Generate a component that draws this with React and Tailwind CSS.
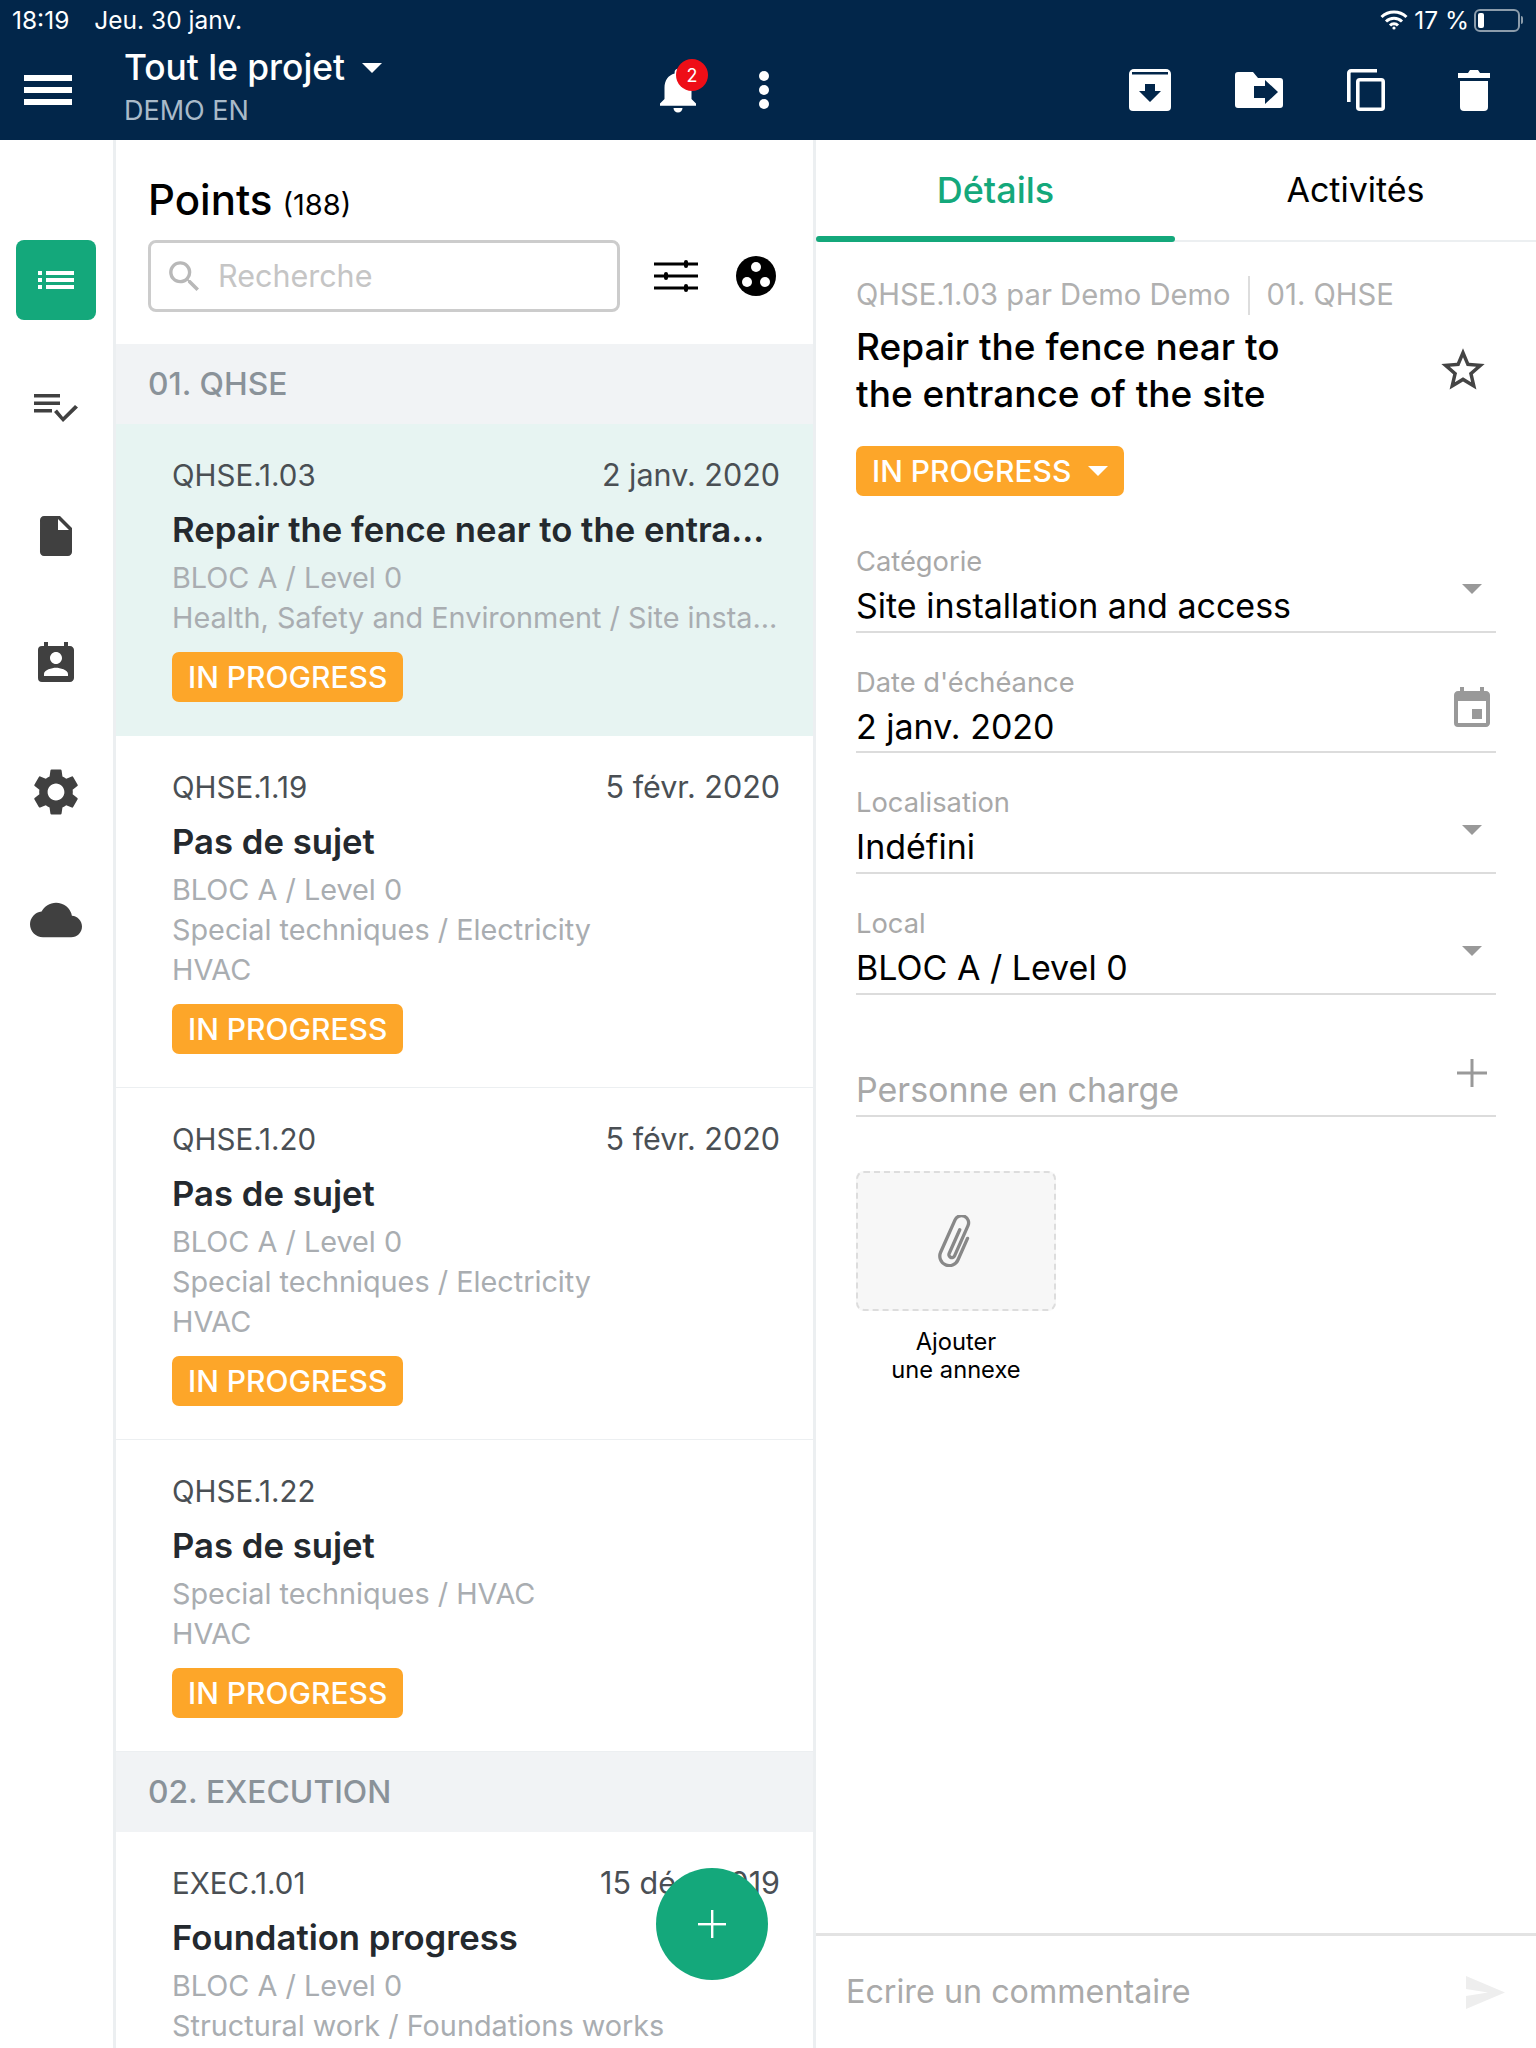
import React from "react";
import {
  MdInsertDriveFile,
  MdPermContactCalendar,
  MdSettings,
  MdCloud,
  MdNotifications,
  MdSearch,
  MdStarBorder,
  MdEvent,
} from "react-icons/md";

const Tri = ({ className }) => (
  <svg viewBox="0 0 20 10" className={className}>
    <polygon points="0,0 20,0 10,10" fill="currentColor" />
  </svg>
);

const ArchiveIcon = () => (
  <svg viewBox="0 0 42 42" className="w-[42px] h-[42px]">
    <path d="M5 0h32a5 5 0 0 1 5 5v33a4 4 0 0 1-4 4H4a4 4 0 0 1-4-4V5a5 5 0 0 1 5-5z" fill="#fff" />
    <rect x="3" y="3" width="36" height="2.5" fill="#02264a" />
    <polygon points="16,15 26,15 26,22 32,22 21,33 10,22 16,22" fill="#02264a" />
  </svg>
);

const FolderIcon = () => (
  <svg viewBox="0 0 48 36" className="w-[48px] h-[36px]">
    <path d="M3 0h15l5 6h22a3 3 0 0 1 3 3v24a3 3 0 0 1-3 3H3a3 3 0 0 1-3-3V3a3 3 0 0 1 3-3z" fill="#fff" />
    <polygon points="19,14 30,14 30,8 43,20 30,32 30,26 19,26" fill="#02264a" />
  </svg>
);

const CopyIcon = () => (
  <svg viewBox="0 0 38 42" className="w-[38px] h-[42px]" fill="none" stroke="#fff" strokeWidth="3.6">
    <path d="M30 1.8H4A2.2 2.2 0 0 0 1.8 4v29" />
    <rect x="10.8" y="10.8" width="25.4" height="29.4" rx="2" />
  </svg>
);

const TrashIcon = () => (
  <svg viewBox="0 0 32 42" className="w-[32px] h-[42px]">
    <path d="M0 4h10l2-3h8l2 3h10v5H0z" fill="#fff" />
    <path d="M2 12h28v26a4 4 0 0 1-4 4H6a4 4 0 0 1-4-4z" fill="#fff" />
  </svg>
);

const Wifi = () => (
  <svg viewBox="0 0 28 20" className="w-[28px] h-[20px]" fill="none" stroke="#fff" strokeWidth="3">
    <path d="M1.5 7a18 18 0 0 1 25 0" />
    <path d="M6 11.5a11.5 11.5 0 0 1 16 0" />
    <path d="M10 15.5a5.5 5.5 0 0 1 8 0" />
    <circle cx="14" cy="18" r="1.6" fill="#fff" stroke="none" />
  </svg>
);

const Battery = () => (
  <div className="flex items-center">
    <div className="w-[46px] h-[23px] rounded-[6px] border-2 border-[#8c9cab] p-[2px]">
      <div className="w-[6px] h-full bg-white rounded-[2px]" />
    </div>
    <div className="w-[2px] h-[8px] bg-[#8c9cab] ml-[1px] rounded-r-sm" />
  </div>
);

const ListIcon = () => (
  <svg viewBox="0 0 36 20" className="w-[36px] h-[20px]" fill="#fff">
    <rect x="0" y="1" width="4" height="4" />
    <rect x="0" y="8" width="4" height="4" />
    <rect x="0" y="15" width="4" height="4" />
    <rect x="8" y="1" width="28" height="4" />
    <rect x="8" y="8" width="28" height="4" />
    <rect x="8" y="15" width="28" height="4" />
  </svg>
);

const CheckListIcon = () => (
  <svg viewBox="0 0 44 28" className="w-[44px] h-[28px]" fill="#404040">
    <rect x="0" y="0" width="26" height="3.5" />
    <rect x="0" y="7.5" width="26" height="3.5" />
    <rect x="0" y="15" width="18" height="3.5" />
    <polygon points="20,18 23,15.5 29,23 41,11 44,13.5 29,28" />
  </svg>
);

const FilterIcon = () => (
  <svg viewBox="0 0 44 32" className="w-[44px] h-[32px]" fill="#000">
    <rect x="0" y="2.5" width="44" height="3" />
    <rect x="0" y="14.5" width="44" height="3" />
    <rect x="0" y="26.5" width="44" height="3" />
    <rect x="30" y="0" width="4" height="8" rx="2" />
    <rect x="10" y="12" width="4" height="8" rx="2" />
    <rect x="30" y="24" width="4" height="8" rx="2" />
  </svg>
);

const GroupIcon = () => (
  <svg viewBox="0 0 40 40" className="w-[40px] h-[40px]">
    <circle cx="20" cy="20" r="20" fill="#000" />
    <circle cx="20" cy="11" r="5" fill="#fff" />
    <circle cx="11" cy="26" r="5" fill="#fff" />
    <circle cx="29" cy="26" r="5" fill="#fff" />
  </svg>
);

const Clip = () => (
  <svg viewBox="-16.5 -22 33 44" className="w-[40px] h-[52px]" fill="none" stroke="#888" strokeWidth="2.8" strokeLinecap="round">
    <g transform="rotate(24)">
      <path d="M8-6V14a8 8 0 0 1-16 0V-16a6 6 0 0 1 12 0V12a2.5 2.5 0 0 1-5 0V-10" />
    </g>
  </svg>
);

const Badge = ({ children, className = "" }) => (
  <div className={"inline-flex items-center h-[50px] rounded-[7px] bg-[#fda629] text-white text-[30px] font-medium px-[16px] " + className}>
    {children}
  </div>
);

const Row = ({ code, date, title, lines, selected }) => (
  <div className={"pt-[33px] pl-[56px] pr-[33px] " + (selected ? "pb-[34px] bg-[#e7f4f2]" : "pb-[33px] border-b border-[#eceff1] bg-white")}>
    <div className="flex justify-between items-center h-[36px] text-[#4a4f54]">
      <span className="text-[29.5px]">{code}</span>
      <span className="text-[30.5px]">{date}</span>
    </div>
    <div className="mt-[10px] h-[52px] leading-[52px] text-[34.7px] font-semibold text-[#24292e] whitespace-nowrap">{title}</div>
    <div className="mt-[3px] text-[28.8px] leading-[40px] text-[#a9adb1]">
      {lines.map((l) => (
        <div key={l} className="whitespace-nowrap">{l}</div>
      ))}
    </div>
    <div className="mt-[14px] flex">
      <Badge>IN PROGRESS</Badge>
    </div>
  </div>
);

const Section = ({ children }) => (
  <div className="h-[80px] flex items-center pl-[32px] bg-[#f1f3f5] text-[31.8px] font-medium text-[#8a9299]">{children}</div>
);

const Field = ({ label, value, icon }) => (
  <div className="relative h-[120.7px] pt-[32px] border-b-2 border-[#dcdcdc]">
    <div className="h-[36px] leading-[36px] text-[27.3px] text-[#a8a8a8]">{label}</div>
    <div className="mt-[3px] h-[46px] leading-[46px] text-[34px] text-black">{value}</div>
    <div className="absolute right-[14px] top-[52px] text-[#999]">{icon}</div>
  </div>
);

const Nav = ({ children, active }) => (
  <div className="h-[128px] flex items-start justify-center pr-[1px]">
    <div className={"w-[80px] h-[80px] rounded-[8px] flex items-center justify-center " + (active ? "bg-[#14a87b]" : "")}>{children}</div>
  </div>
);

export default function App() {
  return (
    <div className="relative w-[1536px] h-[2048px] overflow-hidden bg-white flex flex-col [font-family:Inter,sans-serif]">
      <header className="h-[140px] shrink-0 bg-[#02264a] text-white">
        <div className="h-[40px] flex items-center justify-between pl-[12px] pr-[13px] text-[24.5px]">
          <div className="flex gap-[25px]">
            <span>18:19</span>
            <span>Jeu. 30 janv.</span>
          </div>
          <div className="flex items-center">
            <Wifi />
            <span className="ml-[6px] mr-[5px]">17 %</span>
            <Battery />
          </div>
        </div>
        <div className="h-[100px] flex items-center pl-[24px] pr-[46px]">
          <div className="w-[48px] h-[30px] flex flex-col justify-between">
            <div className="h-[6px] bg-white" />
            <div className="h-[6px] bg-white" />
            <div className="h-[6px] bg-white" />
          </div>
          <div className="ml-[52px] w-[534px] mb-[9px]">
            <div className="flex items-center h-[50px] text-[35.3px] font-medium">
              Tout le projet
              <Tri className="w-[20px] h-[10px] ml-[17px] text-white" />
            </div>
            <div className="mt-[1px] h-[34px] leading-[34px] text-[27px] text-[#a9bac9]">DEMO EN</div>
          </div>
          <div className="relative w-[40px] h-[44px] flex items-center justify-center">
            <MdNotifications className="w-[54px] h-[54px] shrink-0" />
            <div className="absolute -right-[10px] -top-[9px] w-[32px] h-[32px] rounded-full bg-[#ee0e17] flex items-center justify-center text-[18px]">2</div>
          </div>
          <svg viewBox="0 0 10 38" className="ml-[61px] w-[10px] h-[38px]" fill="#fff">
            <circle cx="5" cy="5" r="5" />
            <circle cx="5" cy="19" r="5" />
            <circle cx="5" cy="33" r="5" />
          </svg>
          <div className="ml-auto flex items-center">
            <ArchiveIcon />
            <div className="ml-[64px]"><FolderIcon /></div>
            <div className="ml-[64px]"><CopyIcon /></div>
            <div className="ml-[73px]"><TrashIcon /></div>
          </div>
        </div>
      </header>

      <main className="flex-1 flex min-h-0">
        <aside className="w-[116px] shrink-0 border-r-[3px] border-[#eceff1] pt-[100px]">
          <Nav active><ListIcon /></Nav>
          <Nav><CheckListIcon /></Nav>
          <Nav><MdInsertDriveFile className="w-[48px] h-[48px] text-[#404040]" /></Nav>
          <Nav><MdPermContactCalendar className="w-[48px] h-[48px] text-[#404040]" /></Nav>
          <Nav><MdSettings className="w-[56px] h-[56px] text-[#404040] shrink-0" /></Nav>
          <Nav><MdCloud className="w-[52px] h-[52px] text-[#404040]" /></Nav>
        </aside>

        <section className="w-[700px] shrink-0 border-r-[3px] border-[#eceff1] overflow-hidden">
          <div className="pl-[32px] pr-[37px]">
            <div className="mt-[30px] h-[60px] flex items-baseline text-black">
              <span className="text-[42px] leading-[60px] font-medium">Points</span>
              <span className="ml-[10px] text-[29px]">(188)</span>
            </div>
            <div className="mt-[10px] flex items-center">
              <div className="w-[472px] h-[72px] rounded-[8px] border-[3px] border-[#cccccc] flex items-center pl-[13px]">
                <MdSearch className="w-[41px] h-[41px] text-[#b8b8b8] shrink-0" />
                <span className="ml-[13px] text-[30.5px] text-[#c5c5c5]">Recherche</span>
              </div>
              <div className="ml-[34px]"><FilterIcon /></div>
              <div className="ml-[38px]"><GroupIcon /></div>
            </div>
          </div>
          <div className="mt-[32px]">
            <Section>01. QHSE</Section>
            <Row selected code="QHSE.1.03" date="2 janv. 2020" title="Repair the fence near to the entra..." lines={["BLOC A / Level 0", "Health, Safety and Environment / Site insta..."]} />
            <Row code="QHSE.1.19" date="5 févr. 2020" title="Pas de sujet" lines={["BLOC A / Level 0", "Special techniques / Electricity", "HVAC"]} />
            <Row code="QHSE.1.20" date="5 févr. 2020" title="Pas de sujet" lines={["BLOC A / Level 0", "Special techniques / Electricity", "HVAC"]} />
            <Row code="QHSE.1.22" date="" title="Pas de sujet" lines={["Special techniques / HVAC", "HVAC"]} />
            <Section>02. EXECUTION</Section>
            <Row code="EXEC.1.01" date="15 déc. 2019" title="Foundation progress" lines={["BLOC A / Level 0", "Structural work / Foundations works"]} />
          </div>
        </section>

        <section className="flex-1 min-w-0 flex flex-col">
          <div className="relative h-[102px] flex border-b-2 border-[#eceff1]">
            <div className="relative w-[359px] flex items-center justify-center pb-[1px] text-[36px] font-medium text-[#14a87b]">
              Détails
              <div className="absolute left-0 right-0 -bottom-[2px] h-[6px] rounded-[3px] bg-[#14a87b]" />
            </div>
            <div className="w-[361px] flex items-center justify-center pb-[1px] text-[34px] text-black">Activités</div>
          </div>
          <div className="flex-1 px-[40px] pt-[33px]">
            <div className="h-[40px] flex items-center text-[29.2px] text-[#b0b0b0]">
              <span>QHSE.1.03 par Demo Demo</span>
              <span className="mx-[17px] w-[2px] h-[39px] bg-[#dddddd]" />
              <span>01. QHSE</span>
            </div>
            <div className="mt-[8px] flex items-center justify-between pr-[2px]">
              <div className="text-[37px] leading-[47px] font-medium text-black">
                Repair the fence near to
                <br />
                the entrance of the site
              </div>
              <MdStarBorder className="w-[52px] h-[52px] text-[#444] mr-[5px]" />
            </div>
            <div className="mt-[29px] flex">
              <Badge>
                IN PROGRESS
                <Tri className="w-[20px] h-[10px] ml-[17px] text-white" />
              </Badge>
            </div>
            <div className="mt-[16px]">
              <Field label="Catégorie" value="Site installation and access" icon={<Tri className="w-[20px] h-[10px] mt-[20px]" />} />
              <Field label="Date d'échéance" value="2 janv. 2020" icon={<MdEvent className="w-[48px] h-[48px] -mr-[14px]" />} />
              <Field label="Localisation" value="Indéfini" icon={<Tri className="w-[20px] h-[10px] mt-[20px]" />} />
              <Field label="Local" value="BLOC A / Level 0" icon={<Tri className="w-[20px] h-[10px] mt-[20px]" />} />
              <div className="relative h-[122.5px] border-b-2 border-[#dcdcdc] flex items-end pb-[2px]">
                <span className="h-[46px] leading-[46px] text-[34px] text-[#a8a8a8]">Personne en charge</span>
                <svg viewBox="0 0 30 28" className="absolute right-[9px] top-[64px] w-[30px] h-[28px]" fill="#999">
                  <rect x="13.5" y="0" width="3" height="28" />
                  <rect x="0" y="12.5" width="30" height="3" />
                </svg>
              </div>
            </div>
            <div className="mt-[54px] w-[200px]">
              <div className="h-[140px] rounded-[8px] border-2 border-dashed border-[#dddddd] bg-[#f7f7f7] flex items-center justify-center">
                <Clip />
              </div>
              <div className="mt-[16.5px] text-center text-[23.7px] leading-[28px] text-black">
                Ajouter
                <br />
                une annexe
              </div>
            </div>
          </div>
          <div className="h-[115px] border-t-[3px] border-[#e3e3e3] flex items-center pl-[30px] pr-[31px]">
            <span className="text-[32.3px] text-[#aaaaaa]">Ecrire un commentaire</span>
            <svg viewBox="0 0 39 33" className="ml-auto w-[39px] h-[33px]" fill="#eeeeee">
              <polygon points="0,0 39,16.5 0,33 0,20 22,16.5 0,13" />
            </svg>
          </div>
        </section>
      </main>

      <div className="absolute left-[656px] top-[1868px] w-[112px] h-[112px] rounded-full bg-[#14a87b] flex items-center justify-center">
        <svg viewBox="0 0 28 28" className="w-[28px] h-[28px]" fill="#fff">
          <rect x="13" y="0" width="2.4" height="28" />
          <rect x="0" y="13" width="28" height="2.4" />
        </svg>
      </div>
    </div>
  );
}
